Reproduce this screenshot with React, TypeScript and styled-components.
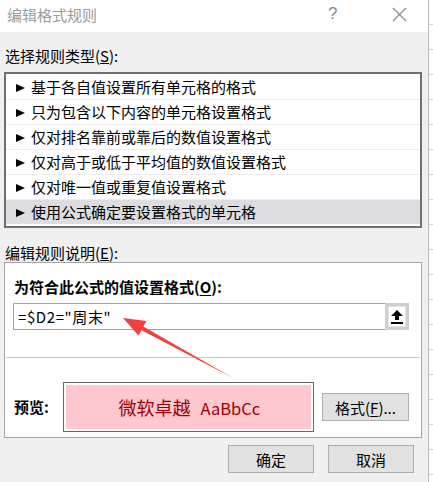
import { FC } from "react";
import styled, { createGlobalStyle } from "styled-components";

const GlobalStyle = createGlobalStyle`
  html, body {
    margin: 0;
    padding: 0;
    background: #ffffff;
  }
  body {
    font-family: "Noto Sans CJK SC", "Microsoft YaHei", sans-serif;
    color: #000000;
  }
`;

const RULE_TYPES = [
  "基于各自值设置所有单元格的格式",
  "只为包含以下内容的单元格设置格式",
  "仅对排名靠前或靠后的数值设置格式",
  "仅对高于或低于平均值的数值设置格式",
  "仅对唯一值或重复值设置格式",
  "使用公式确定要设置格式的单元格",
];

const SELECTED = 5;

const App: FC = () => {
  return (
    <>
      <GlobalStyle />
      <Screen>
        <Dialog>
          <TitleBar>
            <Title>编辑格式规则</Title>
            <HelpMark>?</HelpMark>
            <CloseButton>
              <svg width="15" height="15" viewBox="0 0 15 15">
                <path d="M1 1 L14 14 M14 1 L1 14" stroke="#8a8a8a" strokeWidth="1.2" fill="none" />
              </svg>
            </CloseButton>
          </TitleBar>

          <Body>
            <SectionLabel top={16} bottom={8}>
              选择规则类型(<u>S</u>):
            </SectionLabel>
            <ListBox>
              {RULE_TYPES.map((text, index) => (
                <ListRow key={text} selected={index === SELECTED} last={index === RULE_TYPES.length - 1}>
                  <Triangle />
                  <span>{text}</span>
                </ListRow>
              ))}
            </ListBox>

            <SectionLabel top={17} bottom={1}>
              编辑规则说明(<u>E</u>):
            </SectionLabel>
            <Panel>
              <BoldLabel>
                为符合此公式的值设置格式(<u>O</u>):
              </BoldLabel>
              <FormulaBox>
                <FormulaText>=$D2="周末"</FormulaText>
                <CollapseButton>
                  <svg width="12" height="14" viewBox="0 0 12 14">
                    <path d="M6 0 L12 6 L8 6 L8 10 L4 10 L4 6 L0 6 Z" fill="#000" />
                    <rect x="0" y="12" width="12" height="2" fill="#000" />
                  </svg>
                </CollapseButton>
              </FormulaBox>
              <Divider />
              <PreviewRow>
                <BoldLabel as="span">预览:</BoldLabel>
                <PreviewBox>
                  <PreviewFill>
                    微软卓越<PreviewLatin>AaBbCc</PreviewLatin>
                  </PreviewFill>
                </PreviewBox>
                <DialogButton width={87}>
                  格式(<u>F</u>)...
                </DialogButton>
              </PreviewRow>
            </Panel>

            <Footer>
              <DialogButton width={86}>确定</DialogButton>
              <DialogButton width={86}>取消</DialogButton>
            </Footer>
          </Body>

          <Annotation width="428" height="482" viewBox="0 0 428 482">
            <polygon
              points="123,318 146.5,321 143.3,326.6 233,378 141.5,330.2 138.5,335.5"
              fill="#f2403c"
            />
          </Annotation>
        </Dialog>
        <SheetEdge />
      </Screen>
    </>
  );
};

export default App;

const Screen = styled.div`
  display: flex;
  width: 433px;
  height: 482px;
  overflow: hidden;
`;

const Dialog = styled.div`
  position: relative;
  display: flex;
  flex-direction: column;
  width: 428px;
  height: 482px;
  background-color: #f0f0f0;
`;

const TitleBar = styled.div`
  display: flex;
  align-items: center;
  height: 32px;
  padding: 0 0 0 7px;
  background-color: #ffffff;
  box-sizing: border-box;
`;

const Title = styled.div`
  flex: 1;
  font-size: 15px;
  line-height: 20px;
  color: #9b9b9b;
  margin-top: -3px;
`;

const HelpMark = styled.div`
  width: 20px;
  font-family: "Liberation Sans", sans-serif;
  font-size: 17px;
  color: #8a8a8a;
  margin-top: -4px;
`;

const CloseButton = styled.div`
  display: flex;
  align-items: center;
  justify-content: center;
  width: 50px;
  margin-left: 26px;
  margin-right: 4px;
  margin-top: -4px;
`;

const Body = styled.div`
  display: flex;
  flex-direction: column;
  padding: 0 6px 0 4px;
`;

const SectionLabel = styled.div<{ top: number; bottom: number }>`
  margin-top: ${({ top }) => top}px;
  margin-bottom: ${({ bottom }) => bottom}px;
  padding-left: 1px;
  font-size: 15px;
  line-height: 16px;
  height: 16px;

  u {
    text-underline-offset: 1px;
  }
`;

const ListBox = styled.div`
  display: flex;
  flex-direction: column;
  border: 2px solid #6f6f6f;
  background-color: #ffffff;
  padding: 1px 0 2px;
`;

const ListRow = styled.div<{ selected: boolean; last: boolean }>`
  display: flex;
  align-items: center;
  gap: 6px;
  height: 24px;
  padding-left: 10px;
  font-size: 15px;
  line-height: 24px;
  background-color: ${({ selected }) => (selected ? "#dcdce1" : "transparent")};
  border-bottom: ${({ last }) => (last ? "none" : "1px solid #ececec")};
`;

const Triangle = styled.span`
  width: 0;
  height: 0;
  border-left: 9px solid #000000;
  border-top: 4px solid transparent;
  border-bottom: 4px solid transparent;
  margin-top: 2px;
`;

const Panel = styled.div`
  display: flex;
  flex-direction: column;
  border: 1px solid #a5a5a5;
  background-color: #ffffff;
  padding: 15px 0 5px;
`;

const BoldLabel = styled.div`
  font-size: 15px;
  font-weight: bold;
  line-height: 18px;
  margin-left: 9px;

  u {
    text-underline-offset: 2px;
  }
`;

const FormulaBox = styled.div`
  display: flex;
  align-items: stretch;
  height: 27px;
  margin: 7px 12px 0 8px;
  border: 1px solid #a3a3a3;
  box-sizing: border-box;
`;

const FormulaText = styled.div`
  flex: 1;
  padding-left: 4px;
  font-size: 15px;
  line-height: 25px;
  letter-spacing: 0.6px;
`;

const CollapseButton = styled.div`
  display: flex;
  align-items: center;
  justify-content: center;
  width: 24px;
  margin: -1px -1px -1px 0;
  background-color: #ffffff;
  border: 3px solid #cfcfcf;
  box-shadow: inset 0 0 0 1px #e6e6e6;
  box-sizing: border-box;
`;

const Divider = styled.div`
  height: 1px;
  margin: 27px 1px 0;
  background-color: #c9c9c9;
`;

const PreviewRow = styled.div`
  display: flex;
  align-items: center;
  margin-top: 24px;
  padding-right: 12px;
`;

const PreviewBox = styled.div`
  display: flex;
  width: 251px;
  height: 50px;
  margin-left: 14px;
  padding: 2px;
  border: 1px solid #666666;
  background-color: #ffffff;
  box-sizing: border-box;
`;

const PreviewFill = styled.div`
  flex: 1;
  display: flex;
  align-items: center;
  justify-content: center;
  background-color: #ffc7ce;
  color: #9c0006;
  font-size: 18px;
  padding-left: 2px;
`;

const PreviewLatin = styled.span`
  margin-left: 10px;
  font-size: 16.5px;
  margin-top: 2px;
`;

const DialogButton = styled.div<{ width: number }>`
  display: flex;
  align-items: center;
  justify-content: center;
  width: ${({ width }) => width}px;
  height: 28px;
  margin-left: auto;
  background-color: #e1e1e1;
  border: 1px solid #adadad;
  box-sizing: border-box;
  font-size: 15px;

  u {
    text-underline-offset: 2px;
  }
`;

const Footer = styled.div`
  display: flex;
  justify-content: flex-end;
  gap: 14px;
  margin-top: 7px;
  padding-right: 8px;

  ${DialogButton} {
    margin-left: 0;
  }
`;

const Annotation = styled.svg`
  position: absolute;
  top: 0;
  left: 0;
  pointer-events: none;
`;

const SheetEdge = styled.div`
  flex: 1;
  border-left: 1px solid #b9b9b9;
  background-color: #ffffff;
  background-image: repeating-linear-gradient(
    to bottom,
    transparent 0,
    transparent 24px,
    #d4d4d4 24px,
    #d4d4d4 25px
  );
`;
